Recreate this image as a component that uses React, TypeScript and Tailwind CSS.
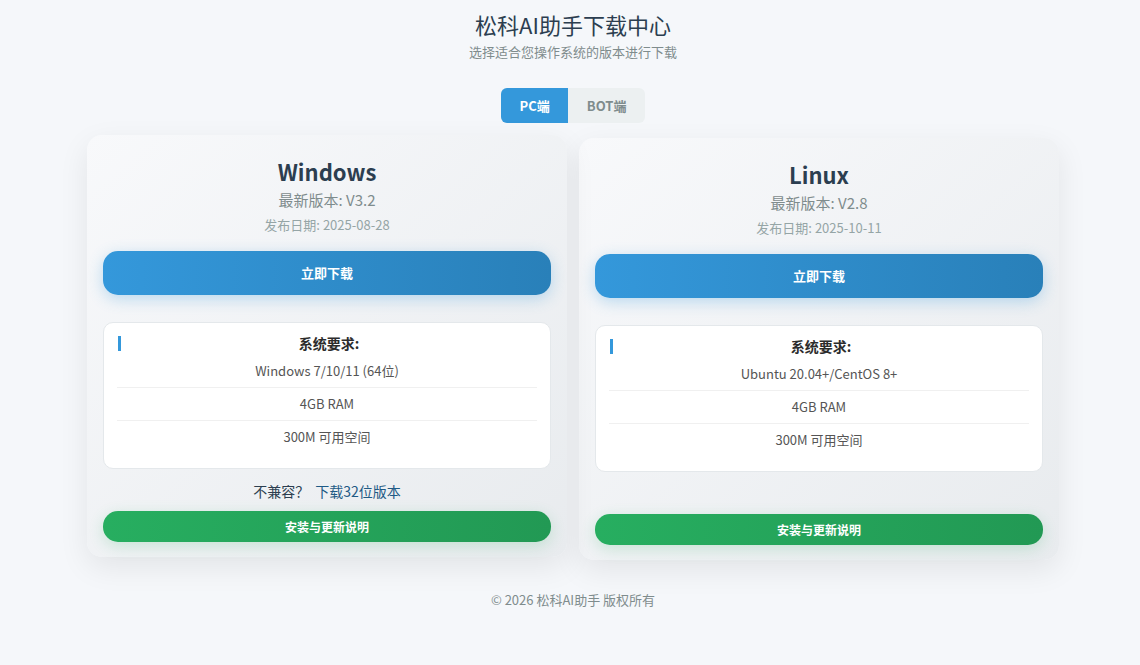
import { useState } from 'react';

type Platform = {
  name: string;
  version: string;
  date: string;
  reqs: string[];
  fallback?: string;
  raised?: boolean;
};

const PLATFORMS: Platform[] = [
  {
    name: 'Windows',
    version: 'V3.2',
    date: '2025-08-28',
    reqs: ['Windows 7/10/11 (64位)', '4GB RAM', '300M 可用空间'],
    fallback: '下载32位版本',
    raised: true,
  },
  {
    name: 'Linux',
    version: 'V2.8',
    date: '2025-10-11',
    reqs: ['Ubuntu 20.04+/CentOS 8+', '4GB RAM', '300M 可用空间'],
  },
];

function PlatformCard({ p }: { p: Platform }) {
  return (
    <div
      className={`w-[480px] rounded-[15px] bg-gradient-to-br from-[#f8f9fb] to-[#e8ebee] px-4 pt-[23px] pb-[15px] shadow-[0_10px_30px_rgba(0,0,0,0.08)] ${
        p.raised ? '-translate-y-[3px]' : ''
      }`}
    >
      {/* Header */}
      <h2 className="text-center text-[22px] font-bold leading-[26px] text-[#2c3e50]">{p.name}</h2>
      <p className="mt-[6px] text-center text-[15px] leading-[20px] text-[#7f8c8d]">最新版本: {p.version}</p>
      <p className="mt-[6px] text-center text-[13px] leading-[18px] text-[#95a5a6]">发布日期: {p.date}</p>

      <button className="mt-[17px] flex h-[44px] w-full items-center justify-center rounded-[15px] bg-gradient-to-r from-[#3498db] to-[#2980b9] text-[13px] font-bold text-white shadow-[0_4px_15px_rgba(52,152,219,0.3)]">
        立即下载
      </button>

      {/* Requirements */}
      <div className="mt-[27px] rounded-[10px] border border-[#e4e8eb] bg-white px-[13px] pt-[13px] pb-[15px]">
        <div className="ml-px h-[15px] border-l-[3px] border-[#3498db] text-center text-[14px] font-bold leading-[15px] text-[#2c2c2c]">
          系统要求:
        </div>
        <ul className="mt-[4px]">
          {p.reqs.map((r, i) => (
            <li
              key={r}
              className={`py-[7px] text-center text-[13px] leading-[18px] text-[#555] ${
                i < p.reqs.length - 1 ? 'border-b border-[#f0f0f0]' : ''
              }`}
            >
              {r}
            </li>
          ))}
        </ul>
      </div>

      <div className={`mt-[12px] text-center text-[14px] leading-[20px] ${p.fallback ? '' : 'invisible'}`}>
        <span className="text-[#2c3e50]">不兼容？</span>
        <a className="ml-[6px] text-[#1f5a85]">{p.fallback ?? '下载32位版本'}</a>
      </div>

      <button className="mt-[10px] flex h-[31px] w-full items-center justify-center rounded-[15px] bg-gradient-to-r from-[#27ae60] to-[#229954] text-[12px] font-bold text-white shadow-[0_4px_15px_rgba(39,174,96,0.2)]">
        安装与更新说明
      </button>
    </div>
  );
}

export default function App() {
  const [tab, setTab] = useState<'pc' | 'bot'>('pc');

  return (
    <div
      className="min-h-[665px] bg-[#f5f7fa] pt-2 pl-[6px]"
      style={{ fontFamily: '"Noto Sans CJK SC", "Noto Sans", sans-serif' }}
    >
      <h1 className="text-center text-[22px] leading-[32px] text-[#2c3e50]">松科AI助手下载中心</h1>
      <p className="mt-[2px] text-center text-[13px] leading-[20px] text-[#7f8c8d]">选择适合您操作系统的版本进行下载</p>

      {/* Tabs */}
      <div className="mt-[26px] flex justify-center">
        <div className="flex overflow-hidden rounded-[6px] bg-[#ecf0f1]">
          <button
            onClick={() => setTab('pc')}
            className={`h-[35px] px-[18.5px] text-[13px] font-bold ${
              tab === 'pc' ? 'bg-[#3498db] text-white' : 'text-[#7f8c8d]'
            }`}
          >
            PC端
          </button>
          <button
            onClick={() => setTab('bot')}
            className={`h-[35px] px-[18.5px] text-[13px] font-bold ${
              tab === 'bot' ? 'bg-[#3498db] text-white' : 'text-[#7f8c8d]'
            }`}
          >
            BOT端
          </button>
        </div>
      </div>

      <div className="mt-[15px] flex justify-center gap-3">
        {PLATFORMS.map((p) => (
          <PlatformCard key={p.name} p={p} />
        ))}
      </div>

      <footer className="mt-[30px] text-center text-[13px] leading-[20px] text-[#7f8c8d]">© 2026 松科AI助手 版权所有</footer>
    </div>
  );
}
